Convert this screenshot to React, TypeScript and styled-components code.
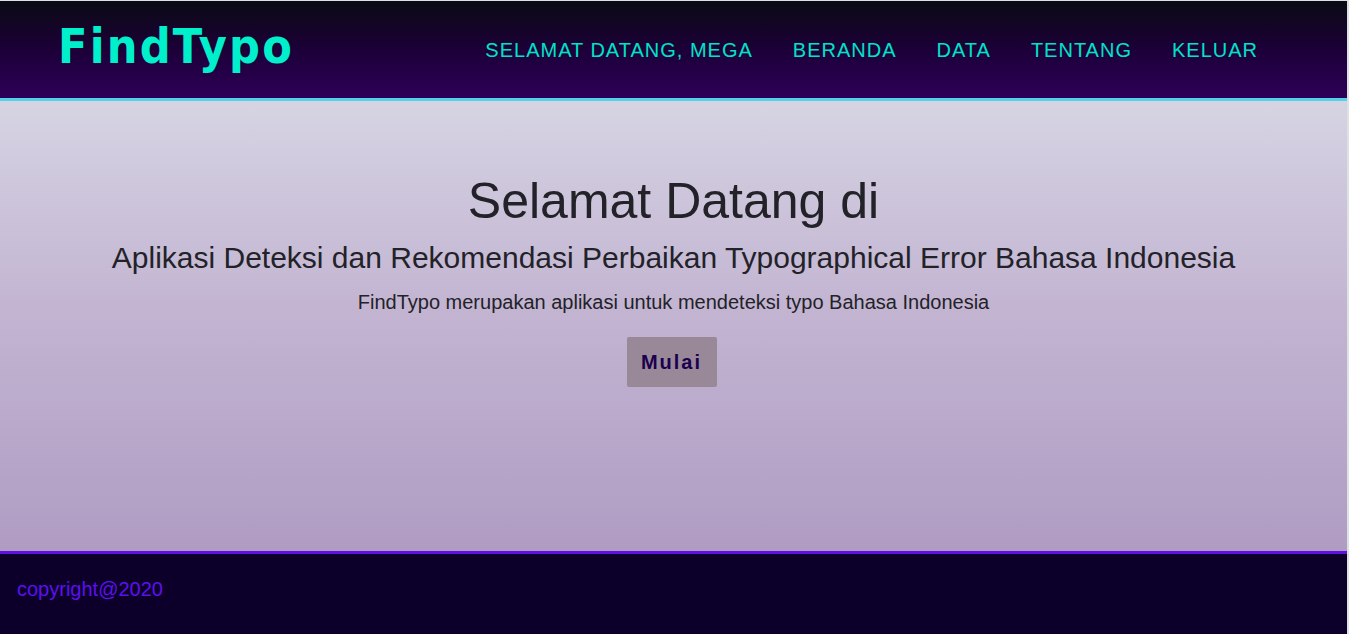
import React from "react";
import styled, { createGlobalStyle } from "styled-components";

const Global = createGlobalStyle`
  html, body { margin: 0; padding: 0; }
  body {
    background: #dde1e4;
    font-family: "Liberation Sans", Arial, sans-serif;
  }
`;

const Page = styled.div`
  margin: 1px 2px 0 0;
  display: flex;
  flex-direction: column;
  min-height: 633px;
`;

const Header = styled.header`
  height: 97px;
  background: linear-gradient(to bottom, #0a0a14 0%, #1c0038 50%, #2d0058 100%);
  border-bottom: 3px solid #4fd2ea;
  display: flex;
  align-items: flex-start;
  justify-content: space-between;
  padding: 0 89px 0 58px;
`;

const Logo = styled.div`
  font-family: "DejaVu Sans Condensed", "DejaVu Sans", Verdana, sans-serif;
  font-stretch: condensed;
  font-weight: bold;
  font-size: 48px;
  letter-spacing: 2.2px;
  color: #00f0cc;
  line-height: 1;
  margin-top: 21px;
`;

const Nav = styled.nav`
  display: flex;
  gap: 40px;
  margin-top: 38px;
`;

const NavLink = styled.a`
  font-family: "Liberation Sans", Arial, sans-serif;
  font-size: 20px;
  letter-spacing: 1px;
  text-transform: uppercase;
  color: #00e3c8;
  text-decoration: none;
  line-height: 22px;
`;

const Hero = styled.main`
  height: 453px;
  background: linear-gradient(to bottom, #d6d4e3 0%, #c3b5d2 45%, #b09cc3 100%);
  border-bottom: 3px solid #6210e0;
  display: flex;
  flex-direction: column;
  align-items: center;
  padding-top: 71px;
  box-sizing: border-box;
  color: #222228;
`;

const Title = styled.h1`
  margin: 0;
  font-weight: normal;
  font-size: 50px;
  line-height: 58px;
`;

const Subtitle = styled.h2`
  margin: 0;
  font-weight: normal;
  font-size: 30px;
  line-height: 34px;
  margin-top: 11px;
`;

const Lead = styled.p`
  margin: 15px 0 0;
  font-size: 20px;
  line-height: 24px;
`;

const StartButton = styled.button`
  margin: 23px 4px 0 0;
  width: 90px;
  height: 50px;
  border: none;
  border-radius: 2px;
  background: #998998;
  color: #1b0050;
  font-family: "Liberation Sans", Arial, sans-serif;
  font-weight: bold;
  font-size: 20px;
  letter-spacing: 2px;
  cursor: pointer;
`;

const Footer = styled.footer`
  flex: 1;
  background: #0c002a;
  padding: 24px 17px;
`;

const Copy = styled.span`
  color: #5c10f0;
  font-size: 20px;
`;

export default function App() {
  return (
    <>
      <Global />
      <Page>
        <Header>
          <Logo>FindTypo</Logo>
          <Nav>
            <NavLink href="#">Selamat Datang, Mega</NavLink>
            <NavLink href="#">Beranda</NavLink>
            <NavLink href="#">Data</NavLink>
            <NavLink href="#">Tentang</NavLink>
            <NavLink href="#">Keluar</NavLink>
          </Nav>
        </Header>
        <Hero>
          <Title>Selamat Datang di</Title>
          <Subtitle>
            Aplikasi Deteksi dan Rekomendasi Perbaikan Typographical Error Bahasa Indonesia
          </Subtitle>
          <Lead>FindTypo merupakan aplikasi untuk mendeteksi typo Bahasa Indonesia</Lead>
          <StartButton>Mulai</StartButton>
        </Hero>
        <Footer>
          <Copy>copyright@2020</Copy>
        </Footer>
      </Page>
    </>
  );
}
